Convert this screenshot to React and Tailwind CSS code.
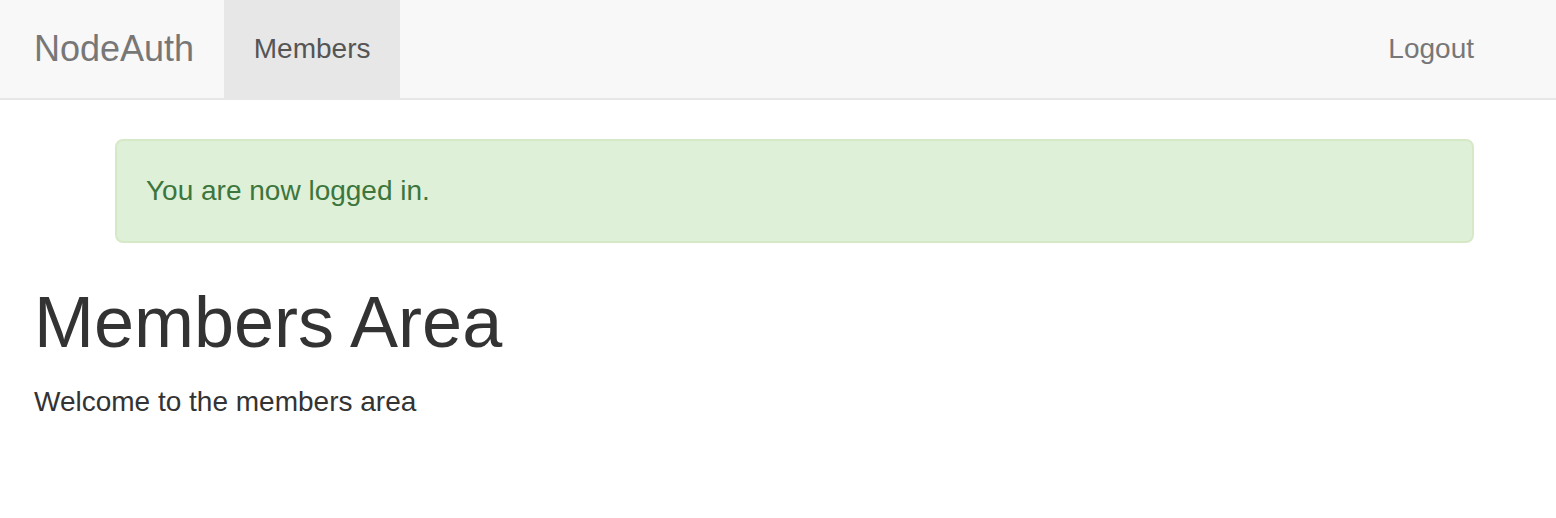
import React from "react";

const Navbar = () => (
  <nav className="flex h-[100px] items-stretch border-b-2 border-[#e7e7e7] bg-[#f8f8f8]">
    {/* Brand */}
    <a href="#" className="flex items-center pl-[34px] pr-[30px] text-[36px] leading-[40px] text-[#777]">
      NodeAuth
    </a>

    {/* Left links */}
    <ul className="flex">
      <li className="flex">
        <a href="#" className="flex w-[176px] items-center justify-center bg-[#e7e7e7] text-[28px] leading-[40px] text-[#555]">
          Members
        </a>
      </li>
    </ul>

    {/* Right links */}
    <ul className="ml-auto mr-[52px] flex">
      <li className="flex">
        <a href="#" className="flex items-center px-[30px] text-[28px] leading-[40px] text-[#777]">
          Logout
        </a>
      </li>
    </ul>
  </nav>
);

const App = () => {
  return (
    <div
      className="min-h-screen bg-white text-[#333]"
      style={{ fontFamily: '"Liberation Sans", Arial, sans-serif' }}
    >
      <Navbar />

      <div className="px-[34px] pt-[39px]">
        {/* Flash message */}
        <div className="ml-[81px] mr-[48px] rounded-[8px] border-2 border-[#d6e9c6] bg-[#dff0d8] py-[30px] pl-[29px] pr-[30px] text-[28px] leading-[40px] text-[#3c763d]">
          You are now logged in.
        </div>

        {/* Page content */}
        <h1 className="mt-[40px] mb-[20px] text-[72px] leading-[1.1] font-normal">
          Members Area
        </h1>
        <p className="text-[28px] leading-[40px]">Welcome to the members area</p>
      </div>
    </div>
  );
};

export default App;
